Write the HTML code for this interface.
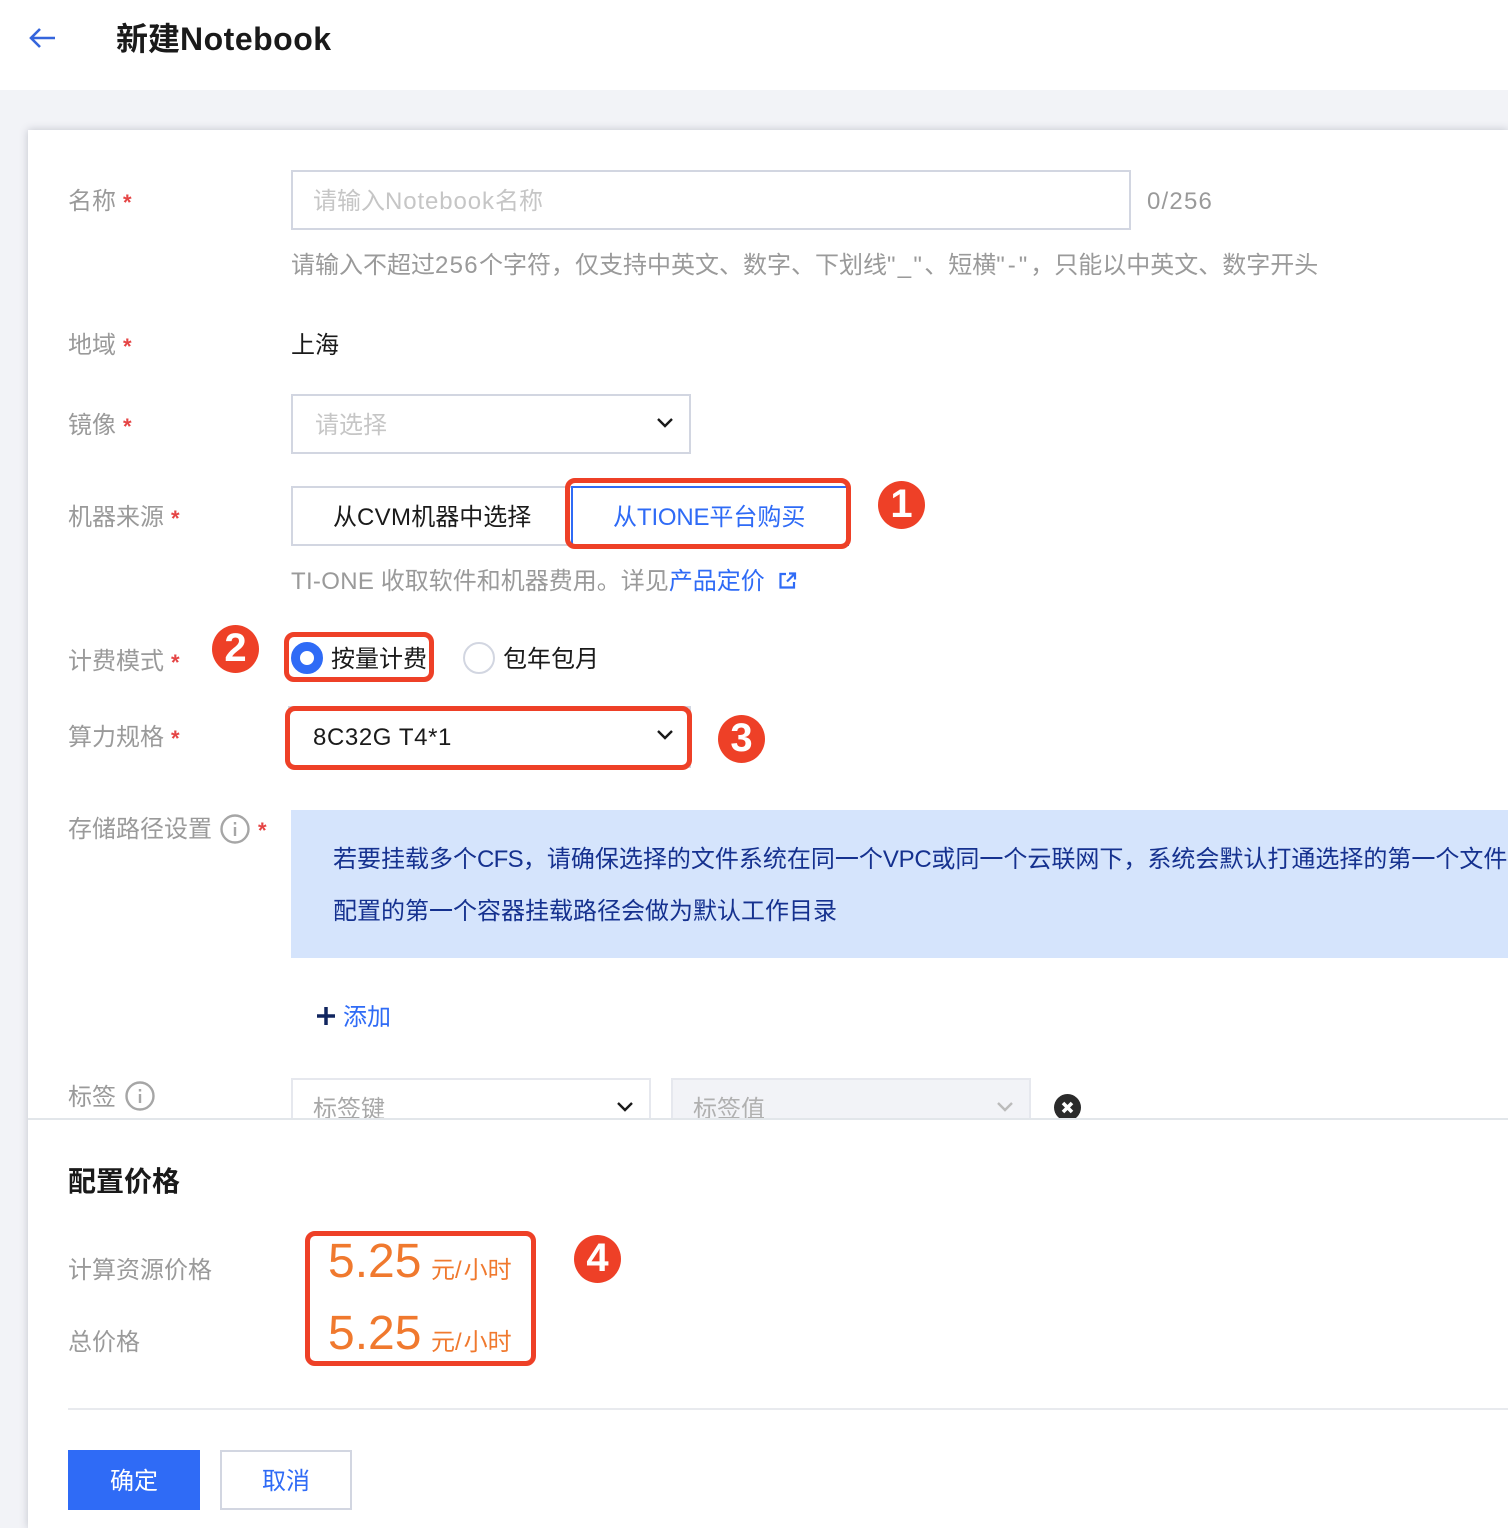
<!DOCTYPE html>
<html lang="zh"><head><meta charset="utf-8"><title>新建Notebook</title>
<style>
*{box-sizing:border-box}
html,body{margin:0;padding:0}
body{width:1508px;height:1528px;position:relative;overflow:hidden;background:#f2f3f7;font-family:"Liberation Sans","Noto Sans CJK SC",sans-serif;font-size:24px;color:#1a1a1a}
.a{position:absolute}
.t{position:absolute;white-space:nowrap;line-height:36px;height:36px;margin-top:2px}
.l{color:#9a9a9a}
.p{color:#c6c6c6}
.b{color:#2f6bf6}
.s{color:#e54545;font-size:22px;font-weight:700;margin-left:1px;margin-top:3px}
.box{position:absolute;border:2px solid #d2d6e1;background:#fff}
.red{position:absolute;border:5px solid #ee4027;border-radius:10px}
.c{position:absolute;width:47px;height:48px;border-radius:50%;background:#ee4027;color:#fff;font-size:40px;font-weight:700;line-height:46px;text-align:center}
.o{color:#f0792e}
svg{position:absolute;overflow:visible}
</style></head><body>
<div class="a" style="left:0;top:0;width:1508px;height:90px;background:#fff"></div>
<svg style="left:29px;top:27px" width="28" height="22" fill="none" stroke="#3565dc" stroke-width="2.6"><path d="M26 11H2M11 2 2 11l9 9"/></svg>
<div class="t" style="left:116px;top:19px;font-size:32px;font-weight:700;color:#1a1a1a">新建<span style="letter-spacing:.5px">Notebook</span></div>

<div class="a" style="left:28px;top:130px;width:1480px;height:1398px;background:#fff;box-shadow:0 0 8px rgba(50,55,80,.25)"></div>

<div class="t l" style="left:68px;top:182px">名称</div><div class="t s" style="left:122px;top:182px">*</div>
<div class="box" style="left:291px;top:170px;width:840px;height:60px"></div>
<div class="t p" style="left:313px;top:182px">请输入<span style="letter-spacing:.9px">Notebook</span>名称</div>
<div class="t l" style="left:1147px;top:182px;letter-spacing:1.2px">0/256</div>
<div class="t l" style="left:291px;top:246px">请输入不超过<span style="letter-spacing:1.3px">256</span>个字符，仅支持中英文、数字、下划线<span style="letter-spacing:2.3px">"_"</span>、短横<span style="letter-spacing:3px">"-"</span>，只能以中英文、数字开头</div>

<div class="t l" style="left:68px;top:326px">地域</div><div class="t s" style="left:122px;top:326px">*</div>
<div class="t" style="left:291px;top:326px">上海</div>

<div class="t l" style="left:68px;top:406px">镜像</div><div class="t s" style="left:122px;top:406px">*</div>
<div class="box" style="left:291px;top:394px;width:400px;height:60px"></div>
<div class="t p" style="left:315px;top:406px">请选择</div>
<svg style="left:657px;top:418px" width="16" height="10" fill="none" stroke="#1a1a1a" stroke-width="2.4"><path d="M1 1l7 7 7-7"/></svg>

<div class="t l" style="left:68px;top:498px">机器来源</div><div class="t s" style="left:170px;top:498px">*</div>
<div class="box" style="left:291px;top:486px;width:282px;height:60px"></div>
<div class="t" style="left:333px;top:498px">从<span style="letter-spacing:.3px">CVM</span>机器中选择</div>
<div class="box" style="left:571px;top:486px;width:278px;height:60px;border-color:#2f6bf6"></div>
<div class="t b" style="left:613px;top:498px">从<span style="letter-spacing:-.2px">TIONE</span>平台购买</div>
<div class="red" style="left:565px;top:478px;width:286px;height:71px"></div>
<div class="c" style="left:878px;top:481px">1</div>
<div class="t l" style="left:291px;top:562px"><span style="letter-spacing:.3px">TI-ONE</span> 收取软件和机器费用。详见<span class="b">产品定价</span></div>
<svg style="left:779px;top:572px" width="17" height="17" fill="none" stroke="#2f6bf6" stroke-width="2.2"><path d="M7 2H1.500V15.500H15V10M10 1.500H16V7.500M16 1.500 8 9.500"/></svg>

<div class="t l" style="left:68px;top:642px">计费模式</div><div class="t s" style="left:170px;top:642px">*</div>
<div class="c" style="left:212px;top:625px">2</div>
<div class="a" style="left:291px;top:642px;width:32px;height:32px;border-radius:50%;border:9px solid #2f6bf6;background:#fff"></div>
<div class="t" style="left:331px;top:640px">按量计费</div>
<div class="red" style="left:284px;top:632px;width:150px;height:50px"></div>
<div class="a" style="left:463px;top:642px;width:32px;height:32px;border-radius:50%;border:2px solid #d2d6e1;background:#fff"></div>
<div class="t" style="left:503px;top:640px">包年包月</div>

<div class="t l" style="left:68px;top:718px">算力规格</div><div class="t s" style="left:170px;top:718px">*</div>
<div class="box" style="left:288px;top:706px;width:403px;height:62px"></div>
<div class="t" style="left:313px;top:718px;letter-spacing:.6px">8C32G T4*1</div>
<svg style="left:657px;top:730px" width="16" height="10" fill="none" stroke="#1a1a1a" stroke-width="2.4"><path d="M1 1l7 7 7-7"/></svg>
<div class="red" style="left:285px;top:706px;width:407px;height:64px"></div>
<div class="c" style="left:718px;top:715px">3</div>

<div class="t l" style="left:68px;top:810px">存储路径设置</div>
<svg style="left:220px;top:814px" width="30" height="30" fill="none" stroke="#a6a6a6" stroke-width="2.4"><circle cx="15" cy="15" r="13.500"/><path d="M15 13v9M15 8v2.500"/></svg>
<div class="t s" style="left:257px;top:810px">*</div>
<div class="a" style="left:291px;top:810px;width:1217px;height:148px;background:#d5e4fc"></div>
<div class="t" style="left:333px;top:840px;color:#15318f">若要挂载多个<span style="letter-spacing:-.7px">CFS</span>，请确保选择的文件系统在同一个<span style="letter-spacing:-.3px">VPC</span>或同一个云联网下，系统会默认打通选择的第一个文件</div>
<div class="t" style="left:333px;top:892px;color:#15318f">配置的第一个容器挂载路径会做为默认工作目录</div>
<svg style="left:317px;top:1006px" width="18" height="20" fill="none" stroke="#10255f" stroke-width="3.500"><path d="M0 10H18M9 1V19"/></svg>
<div class="t b" style="left:343px;top:998px">添加</div>

<div class="t l" style="left:68px;top:1078px">标签</div>
<svg style="left:125px;top:1081px" width="30" height="30" fill="none" stroke="#a6a6a6" stroke-width="2.400"><circle cx="15" cy="15" r="13.500"/><path d="M15 13v9M15 8v2.500"/></svg>
<div class="box" style="left:291px;top:1078px;width:360px;height:60px;border-color:#e6e8ee"></div>
<div class="t l" style="left:313px;top:1090px;color:#a8a8a8">标签键</div>
<svg style="left:617px;top:1102px" width="16" height="10" fill="none" stroke="#1a1a1a" stroke-width="2.400"><path d="M1 1l7 7 7-7"/></svg>
<div class="box" style="left:671px;top:1078px;width:360px;height:60px;border-color:#e6e8ee;background:#f2f3f7"></div>
<div class="t" style="left:693px;top:1090px;color:#b0b0b0">标签值</div>
<svg style="left:997px;top:1102px" width="16" height="10" fill="none" stroke="#bbb" stroke-width="2.400"><path d="M1 1l7 7 7-7"/></svg>
<svg style="left:1054px;top:1094px" width="27" height="27"><circle cx="13.500" cy="13.500" r="13.500" fill="#2b2b2b"/><path d="M9 9l9 9M18 9l-9 9" stroke="#fff" stroke-width="3.600"/></svg>

<div class="a" style="left:28px;top:1118px;width:1480px;height:410px;background:#fff;border-top:2px solid #e2e6ea"></div>
<div class="t" style="left:68px;top:1162px;font-size:28px;font-weight:700;color:#1a1a1a">配置价格</div>
<div class="t l" style="left:68px;top:1251px">计算资源价格</div>
<div class="t l" style="left:68px;top:1323px">总价格</div>
<div class="t o" style="left:328px;top:1242px;font-size:48px">5.25</div>
<div class="t o" style="left:431px;top:1251px">元<span style="letter-spacing:2px">/</span>小时</div>
<div class="t o" style="left:328px;top:1314px;font-size:48px">5.25</div>
<div class="t o" style="left:431px;top:1323px">元<span style="letter-spacing:2px">/</span>小时</div>
<div class="red" style="left:305px;top:1231px;width:231px;height:135px"></div>
<div class="c" style="left:574px;top:1235px">4</div>
<div class="a" style="left:68px;top:1408px;width:1440px;height:2px;background:#e8eaee"></div>
<div class="a" style="left:68px;top:1450px;width:132px;height:60px;background:#2f6bf6;color:#fff;text-align:center;line-height:64px">确定</div>
<div class="box b" style="left:220px;top:1450px;width:132px;height:60px;text-align:center;line-height:60px;color:#2f6bf6">取消</div>
</body></html>
